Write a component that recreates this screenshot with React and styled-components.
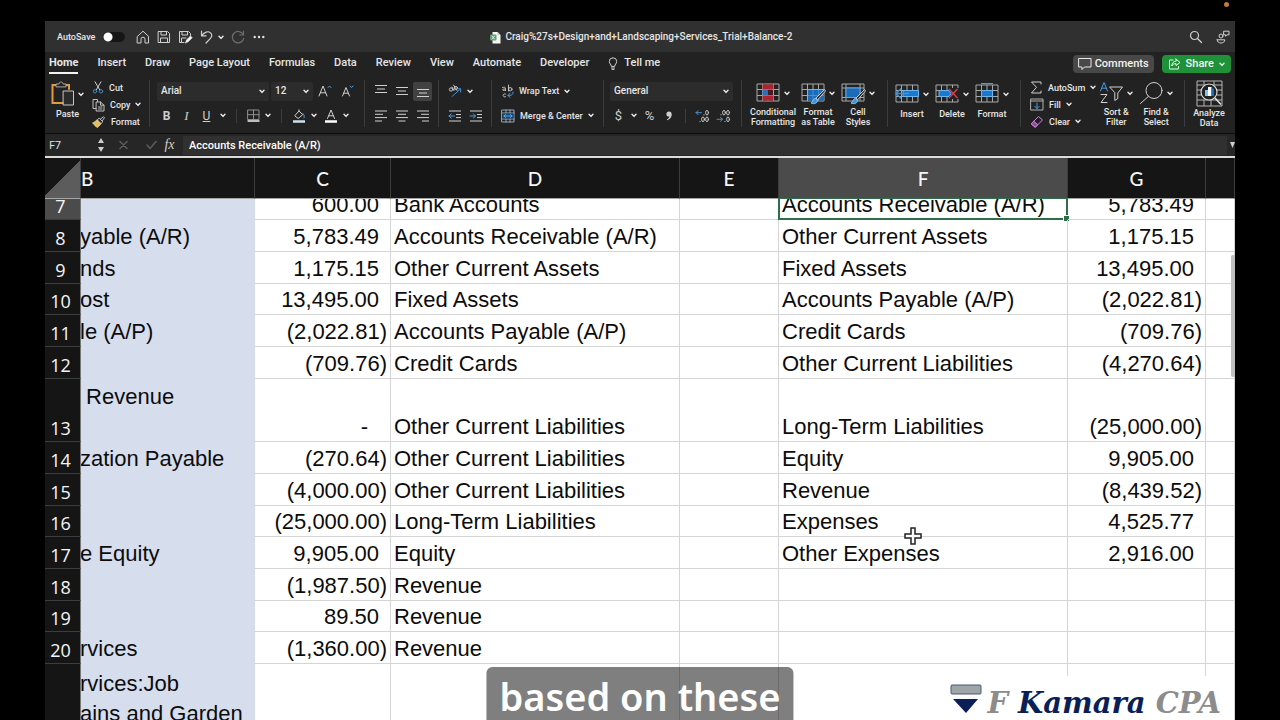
import React from 'react';
import styled, { createGlobalStyle, css } from 'styled-components';

const ui = 'Roboto, "Liberation Sans", sans-serif';
const sheetFont = '"Liberation Sans", Arial, sans-serif';
const headFont = 'Lato, "Open Sans", sans-serif';

const rows = [
  { n: 7, h: 21, b: '', c: '600.00', d: 'Bank Accounts', f: 'Accounts Receivable (A/R)', g: '5,783.49' },
  { n: 8, h: 32, b: 'yable (A/R)', c: '5,783.49', d: 'Accounts Receivable (A/R)', f: 'Other Current Assets', g: '1,175.15' },
  { n: 9, h: 32, b: 'nds', c: '1,175.15', d: 'Other Current Assets', f: 'Fixed Assets', g: '13,495.00' },
  { n: 10, h: 31, b: 'ost', c: '13,495.00', d: 'Fixed Assets', f: 'Accounts Payable (A/P)', g: '(2,022.81)' },
  { n: 11, h: 32, b: 'le (A/P)', c: '(2,022.81)', d: 'Accounts Payable (A/P)', f: 'Credit Cards', g: '(709.76)' },
  { n: 12, h: 32, b: '', c: '(709.76)', d: 'Credit Cards', f: 'Other Current Liabilities', g: '(4,270.64)' },
  { n: 13, h: 63, b: ' Revenue\n ', c: '-', d: 'Other Current Liabilities', f: 'Long-Term Liabilities', g: '(25,000.00)' },
  { n: 14, h: 32, b: 'zation Payable', c: '(270.64)', d: 'Other Current Liabilities', f: 'Equity', g: '9,905.00' },
  { n: 15, h: 32, b: '', c: '(4,000.00)', d: 'Other Current Liabilities', f: 'Revenue', g: '(8,439.52)' },
  { n: 16, h: 31, b: '', c: '(25,000.00)', d: 'Long-Term Liabilities', f: 'Expenses', g: '4,525.77' },
  { n: 17, h: 32, b: 'e Equity', c: '9,905.00', d: 'Equity', f: 'Other Expenses', g: '2,916.00' },
  { n: 18, h: 32, b: '', c: '(1,987.50)', d: 'Revenue', f: '', g: '' },
  { n: 19, h: 31, b: '', c: '89.50', d: 'Revenue', f: '', g: '' },
  { n: 20, h: 32, b: 'rvices', c: '(1,360.00)', d: 'Revenue', f: '', g: '' },
  { n: '', h: 65, b: 'rvices:Job\nains and Garden', c: '', d: '', f: '', g: '' },
];

const tabs = ['Home', 'Insert', 'Draw', 'Page Layout', 'Formulas', 'Data', 'Review', 'View', 'Automate', 'Developer'];

/* icons */

const Icon = ({ w = 14, h = 14, box, children, ...rest }) => (
  <svg
    width={w}
    height={h}
    viewBox={box || `0 0 ${w} ${h}`}
    fill="none"
    stroke="#d0d0d0"
    strokeLinecap="round"
    strokeLinejoin="round"
    aria-hidden="true"
    {...rest}
  >
    {children}
  </svg>
);

const Chevron = () => (
  <Icon w={6} h={5} stroke="#ececec" strokeWidth="1.4"><path d="M1 1.2l2 2.2 2-2.2" /></Icon>
);

const HomeIcon = () => (
  <Icon><path d="M1.5 6.3L7 1.2l5.500 5.100V13H9V9.200a2 2 0 0 0-4 0V13H1.500z" /></Icon>
);

const SaveIcon = () => (
  <Icon><path d="M1.500 1.500h9l2 2v9h-11zM4 1.500v3.500h5.500V1.500M3.500 12.500V8h7v4.500" /></Icon>
);

const SaveEditIcon = () => (
  <Icon w={15}>
    <path d="M6 12.500H1.500v-11h9l2 2v2M4 1.500v3.500h5.500V1.500M3.500 12.500V8H8" />
    <path d="M7.500 12.800l1-2.800 4-4 1.700 1.700-4 4z" fill="#f4f4f4" stroke="#f4f4f4" strokeWidth=".6" />
  </Icon>
);

const UndoIcon = () => (
  <Icon w={13}><path d="M1.500 1.200v4.600h4.600M1.800 5.500C4.500 2 8 .8 10.300 2.600c2.600 2.300 1.400 4.500-.3 6.200L6 13" strokeWidth="1.200" /></Icon>
);

const RedoIcon = () => (
  <Icon stroke="#6d6d6d"><path d="M12.500 1.200v3.800H8.800M12.300 4.800A5.700 5.700 0 1 0 12.700 8.300" strokeWidth="1.200" /></Icon>
);

const DotsIcon = () => (
  <Icon w={12} h={4} stroke="none" fill="#e2e2e2">
    <circle cx="1.700" cy="2" r="1.200" /><circle cx="6" cy="2" r="1.200" /><circle cx="10.300" cy="2" r="1.200" />
  </Icon>
);

const FileIcon = () => (
  <Icon w={11} h={13} stroke="none">
    <path d="M2.500 1h5l3 3v8.500h-8z" fill="#f3f6f3" />
    <path d="M7.500 1v3h3" fill="#b9c9bd" />
    <rect x="0" y="3.500" width="6.500" height="6" rx="1" fill="#5d9c73" />
    <path d="M2 5l2.500 3M4.500 5L2 8" stroke="#e9f5ec" strokeWidth=".9" />
  </Icon>
);

const SearchIcon = () => (
  <Icon><circle cx="5.500" cy="5.500" r="4" strokeWidth="1.200" /><path d="M8.500 8.500l4 4" strokeWidth="1.200" /></Icon>
);

const PeopleIcon = () => (
  <Icon>
    <circle cx="5" cy="6" r="2" />
    <path d="M1.200 9.800h7.600c0 2-1.600 3.200-3.800 3.200s-3.800-1.200-3.800-3.200zM8 1.200h5v3.600h-2L9.500 6.200V4.800H8z" />
  </Icon>
);

const BulbIcon = () => (
  <Icon w={10} h={13}>
    <path d="M3.300 9C3.300 7.300 1.300 6.700 1.300 4.500a3.700 3.700 0 0 1 7.400 0C8.700 6.700 6.700 7.300 6.700 9zM3.500 11h3M4 12.400h2" />
  </Icon>
);

const CommentIcon = () => (
  <Icon stroke="#e8e8e8"><path d="M1 1.500h12v8.500H6.500L4 12.500V10H1z" /></Icon>
);

const ShareIcon = () => (
  <Icon w={13} h={12} stroke="#e9ffe9">
    <path d="M5 2H1.500v9h9V8.500M8 1l4 3.500-4 3V5.700C6 5.600 4.700 6.300 3.700 8c.2-3 1.800-4.700 4.300-5z" />
  </Icon>
);

const PasteIcon = () => (
  <Icon w={24} h={26}>
    <path d="M12 22H1.500V4H18v4" stroke="#e09b3d" strokeWidth="2" strokeLinejoin="miter" />
    <path d="M5 5.500V3h3c0-2.700 4-2.700 4 0h3v2.500z" fill="#222" stroke="#a9a9a9" />
    <path d="M12.500 10h10v14h-10z" fill="#2a2a2a" stroke="#c6c6c6" />
  </Icon>
);

const CutIcon = () => (
  <Icon w={12} h={13}>
    <path d="M3 .8l4.700 8M9 .8l-4.700 8" />
    <circle cx="3" cy="10.300" r="1.700" stroke="#3f86c4" /><circle cx="9" cy="10.300" r="1.700" stroke="#3f86c4" />
  </Icon>
);

const CopyIcon = () => (
  <Icon w={13}>
    <path d="M4 10.500H1v-9h4.500v2M4.500 4h4l3.500 3.200V13H4.500zM8.500 4v3.200H12M6.500 9h3.500M6.500 11h3.500" strokeWidth=".9" />
  </Icon>
);

const BrushIcon = () => (
  <Icon w={14} h={12}>
    <path d="M1 7l4-3 4 4-3.500 3.500C3.500 10.500 2 9 1 7z" fill="#e3bd63" stroke="#e8d38a" strokeWidth=".8" />
    <path d="M5.500 3.500l1.800-1.300 3.500 3.600L9.300 7.300zM8.500 3l3-2.300 1 1-2.200 3" strokeWidth=".9" />
  </Icon>
);

const GrowIcon = ({ small }) => (
  <Icon w={14} h={14}>
    {small
      ? <><path d="M1.500 12L5 3.500 8.500 12M2.700 9.200h4.600" /><path d="M9 2l1.500 1.600L12 2" stroke="#4b9be0" /></>
      : <><path d="M1 12L5 2l4 10M2.400 8.800h5.200" /><path d="M10 3.600L11.500 2 13 3.600" stroke="#4b9be0" /></>}
  </Icon>
);

const BordersIcon = () => (
  <Icon w={13} h={13} strokeWidth=".9">
    <path d="M1 1h11v9.500H1zM6.500 1v9.500M1 5.700h11" stroke="#9a9a9a" />
    <path d="M1 12h11" stroke="#f2f2f2" strokeWidth="1.400" />
  </Icon>
);

const FillColorIcon = () => (
  <Icon>
    <path d="M3 6.500L7 2l3.700 3.700L6.500 9.300zM7 2V.8" />
    <path d="M11 4.500c1.500 1.700 1.500 3.500 1 4.500" stroke="#4b9be0" />
    <path d="M1 12.500h12" stroke="#cfe0ee" strokeWidth="2.500" strokeLinecap="butt" />
  </Icon>
);

const FontColorIcon = () => (
  <Icon>
    <path d="M3.500 9.500L7 1l3.500 8.500M4.700 6.800h4.600" />
    <path d="M1 12.500h12" stroke="#fff" strokeWidth="2.500" strokeLinecap="butt" />
  </Icon>
);

// y positions of the short and long strokes differ per vertical alignment
const lines = {
  top: 'M1 1.500h12M3 5h8M1 8.500h12',
  middle: 'M1 3.500h12M3 7h8M1 10.500h12',
  bottom: 'M1 5.500h12M3 9h8M1 12.500h12',
  left: 'M1 2h12M1 5.300h8M1 8.600h12M1 12h7',
  center: 'M1 2h12M3 5.300h8M1 8.600h12M3.500 12h7',
  right: 'M1 2h12M5 5.300h8M1 8.600h12M6 12h7',
};

const LinesIcon = ({ kind }) => <Icon><path d={lines[kind]} strokeLinecap="butt" /></Icon>;

const OrientationIcon = () => (
  <Icon strokeWidth=".9">
    <circle cx="3" cy="5.500" r="1.700" /><path d="M4 3l2 3.600M5.500 1l3.500 5.500" /><circle cx="7.800" cy="4" r="1.600" />
    <path d="M4 12.500l8.500-7.500M9.300 4.800h3.400v3.300" stroke="#4b9be0" />
  </Icon>
);

const IndentIcon = ({ flip }) => (
  <Icon>
    <path d="M1 2h12M8 5.500h5M8 8.600h5M1 12h12" strokeLinecap="butt" />
    <path d={flip ? 'M1 7h5.500M4.300 4.800L6.500 7 4.300 9.200' : 'M1 7h5.500M3.200 4.800L1 7l2.200 2.200'} stroke="#4b9be0" />
  </Icon>
);

const WrapIcon = () => (
  <Icon w={13}>
    <path d="M1.500 3.500c3-1 3 0 3 3M4.500 5c-4-.3-4 2.300 0 1.200M7.500 1v6" strokeWidth=".9" />
    <circle cx="9.300" cy="5.200" r="1.700" strokeWidth=".9" />
    <path d="M4.500 10c-3.300-1-3.300 3.600 0 2.800" strokeWidth=".9" />
    <path d="M12 8c.5 3-2 3.500-5 3.500M9 9.300L6.800 11.500 9 13.300" stroke="#4b9be0" />
  </Icon>
);

const MergeIcon = () => (
  <Icon>
    <path d="M1 1h12v12H1zM1 4h12M1 10h12M5 1v3M9 1v3M5 10v3M9 10v3" stroke="#9db7cc" strokeWidth=".9" />
    <path d="M1.500 4.500h11v5h-11z" fill="#17466f" stroke="none" />
    <path d="M3 7h8M4.500 5.500L3 7l1.500 1.500M9.500 5.500L11 7 9.500 8.500" stroke="#62b2f2" strokeWidth=".9" />
  </Icon>
);

const CommaIcon = () => (
  <Icon w={8} h={12} stroke="none" fill="#d0d0d0">
    <circle cx="4" cy="4" r="2.600" />
    <path d="M6.600 4c.2 3.200-1.500 5.300-4.300 6.300l-.4-.8C3.600 8.700 4.300 7.500 4.300 6z" />
  </Icon>
);

const DecimalIcon = ({ less }) => (
  <Icon w={15} strokeWidth=".9">
    <path d={less ? 'M5 5.800h0M9 12.500h0' : 'M9 5.800h0M5 12.500h0'} strokeWidth="1.200" />
    <ellipse cx="12" cy="3.700" rx="1.400" ry="2.300" />
    <ellipse cx="12" cy="10.300" rx="1.400" ry="2.300" />
    <ellipse cx="8" cy={less ? 3.7 : 10.3} rx="1.400" ry="2.300" />
    <path d={less ? 'M1 10.300h5.500M4.500 8.300l2 2-2 2' : 'M1 3.700h5.500M3 1.700l-2 2 2 2'} stroke="#4b9be0" />
  </Icon>
);

const Grid = ({ children }) => (
  <Icon w={25} h={23} strokeLinecap="butt" strokeLinejoin="miter">
    <path d="M1 2h22v17H1zM1 7.500h22M1 13.500h22M6.500 2v17M12 2v17M17.500 2v17" stroke="#a8a8a8" />
    {children}
  </Icon>
);

const PaintBrush = () => (
  <>
    <path d="M23.500 7.500L15 16l1.500 2 8-9z" fill="#333" stroke="#d8d8d8" strokeWidth=".9" />
    <path d="M14.500 16.300c-2.500 0-2 3.700-4.500 4.700 3 1.500 6.700.5 6.300-3z" fill="#3b94dc" stroke="#9dd0f7" strokeWidth=".8" />
  </>
);

const CondIcon = () => (
  <Grid>
    <path d="M6.500 2.500h11v5h-11zM6.500 13.500h11v5h-11z" fill="#b0202f" stroke="none" />
    <path d="M6.500 8h5v5h-5z" fill="#2f6fb5" stroke="none" />
    <path d="M12 8h5v5h-5z" fill="#4a1a22" stroke="none" />
  </Grid>
);
const TableIcon = () => <Grid><path d="M7 8h16v10.500H7z" fill="#1c6bb8" stroke="none" /><path d="M12 8v10M17.500 8v10M7 13.500h16" stroke="#5ea5e0" strokeWidth=".6" /><PaintBrush /></Grid>;

// one wide cell instead of the full grid
const StyleIcon = () => (
  <Icon w={25} h={23} strokeLinecap="butt" strokeLinejoin="miter">
    <path d="M1 2h22v17H1zM1 6h22M1 15.500h22M5 2v17M19 2v17" stroke="#a8a8a8" />
    <path d="M5 6h14v9.500H5z" fill="#1c6bb8" stroke="#5ea5e0" />
    <PaintBrush />
  </Icon>
);
const InsertIcon = () => (
  <Grid><path d="M8 7.500h15.500v6H8z" fill="#1c78cf" stroke="#6db5ee" /><path d="M14 10.500H1M6 5.500l-5 5 5 5" stroke="#3b94dc" strokeWidth="1.300" /></Grid>
);
const DeleteIcon = () => (
  <Grid><path d="M13 5h11v11H13z" fill="#222" stroke="none" /><path d="M4 7.500h10l2 3-2 3H4z" fill="#1c78cf" stroke="#6db5ee" /><path d="M14 6l8.500 9M22.500 6l-8.500 9" stroke="#d3414d" strokeWidth="1.400" /></Grid>
);
const FormatIcon = () => (
  <Grid><path d="M6.500 7.500h11v6h-11z" fill="#1c78cf" stroke="#6db5ee" /><path d="M6 .600h12" stroke="#4b9be0" strokeWidth="1.200" /></Grid>
);

const SumIcon = () => <Icon w={13} h={13}><path d="M11 3V1H1.500l5 5.300-5 5.700H11v-2" /></Icon>;
const FillIcon = () => (
  <Icon w={14} h={13}><path d="M1 1h12v11H1zM1 3h12" stroke="#b0b0b0" /><path d="M7 5v5.500M4.800 8.300L7 10.500l2.200-2.200" stroke="#4b9be0" /></Icon>
);
const ClearIcon = () => (
  <Icon w={14} h={13}><path d="M1.500 8.500L8.500 1.500l4 3.500-7 7z" stroke="#c98bd6" /><path d="M1.500 8.500l2.300-2.300 4 3.500-2.300 2.300z" fill="#9a45ad" stroke="#c98bd6" /></Icon>
);

const SortIcon = () => (
  <Icon w={25} h={24}>
    <path d="M1.500 10L5 1.500 8.500 10M2.700 7.200h4.600" stroke="#4b9be0" />
    <path d="M2 13.500h6L2 21.500h6" />
    <path d="M11 6h12.500l-4.700 6v5.500l-3 2V12z" />
  </Icon>
);
const FindIcon = () => <Icon w={25} h={24}><circle cx="15" cy="9.500" r="8" /><path d="M9.300 15.500L1.500 22.500" /></Icon>;
const AnalyzeIcon = () => (
  <Icon w={27} h={27} strokeLinecap="butt">
    <path d="M1 1h25v25H1zM1 5h25M1 10h5M21 10h5M1 15h5M21 15h5M1 20h25M8 20v6M15 20v6M8 1v4M18 1v4" stroke="#b5b5b5" />
    <circle cx="13" cy="12" r="8" fill="#222" stroke="#ddd" strokeWidth="1.200" />
    <path d="M19 18l6 6.500" stroke="#e2e2e2" strokeWidth="1.600" />
    <path d="M9 10h3v6H9z" fill="#7fc0ee" stroke="none" /><path d="M12 7h3.500v9H12z" fill="#fff" stroke="none" /><path d="M15.500 8.500H18V16h-2.500z" fill="#1c6bb8" stroke="none" />
  </Icon>
);

/* styled parts */

const GlobalStyle = createGlobalStyle`
  * { box-sizing: border-box; }
  body { margin: 0; background: #000; }
  button, input, select {
    font: inherit;
    color: inherit;
    border: 0;
    padding: 0;
    background: none;
  }
`;

const Screen = styled.div`
  position: relative;
  height: 100vh;
  padding: 21px 45px 0;
  overflow: hidden;
  background: #000;
`;

const RecordDot = styled.span`
  position: absolute;
  top: 2px;
  right: 51px;
  width: 5px;
  height: 5px;
  border-radius: 50%;
  background: #c07a3a;
`;

const Window = styled.div`
  display: flex;
  flex-direction: column;
  height: 100%;
  overflow: hidden;
  background: #222;
  color: #e6e6e6;
  font: 500 9px/10px ${ui};
`;

const TitleBar = styled.header`
  display: grid;
  grid-template-columns: 1fr auto 1fr;
  align-items: center;
  height: 31px;
  padding: 1px 5px 0 12px;
  background: #303030;
`;

const Quick = styled.div`
  display: flex;
  align-items: center;
  gap: 7px;
  justify-content: ${(p) => (p.$end ? 'flex-end' : 'flex-start')};
`;

const IconButton = styled.button`
  display: flex;
  align-items: center;
  justify-content: center;
  flex: none;
  gap: 5px;
  min-width: ${(p) => p.$w || 14}px;
  height: ${(p) => p.$h || 14}px;
  ${(p) => p.$active && css`background: #414141; border-radius: 2px;`}
`;

const SwitchLabel = styled.label`
  display: flex;
  align-items: center;
  gap: 8px;
  margin-right: 4px;
`;

const Switch = styled.input`
  appearance: none;
  width: 22px;
  height: 10px;
  margin: 0;
  border-radius: 5px;
  background: radial-gradient(circle at 5px 5px, #fff 4px, transparent 5px), #161616;
`;

const Title = styled.h1`
  display: flex;
  align-items: center;
  gap: 4px;
  margin: 0;
  padding-right: 4px;
  font-size: 10px;
  font-weight: 500;
  line-height: 14px;
  white-space: nowrap;
`;

const TabRow = styled.nav`
  display: flex;
  align-items: center;
  gap: 19px;
  height: 24px;
  padding: 0 4px;
  font-size: 11px;
  line-height: 14px;
`;

const Tab = styled.button`
  display: flex;
  align-items: center;
  gap: 6px;
  height: 20px;
  border-bottom: 2px solid ${(p) => (p.$active ? '#f2f2f2' : 'transparent')};
  font-weight: ${(p) => (p.$active ? 700 : 500)};
  white-space: nowrap;
`;

const TabActions = styled.div`
  display: flex;
  gap: 8px;
  margin-left: auto;
`;

const ActionButton = styled.button`
  display: flex;
  align-items: center;
  gap: ${(p) => (p.$primary ? 5 : 3)}px;
  height: 18px;
  padding: 0 ${(p) => (p.$primary ? 6 : 5)}px;
  border-radius: 4px;
  background: ${(p) => (p.$primary ? '#1e9139' : '#484848')};
  color: #f4f4f4;
`;

const Ribbon = styled.div`
  display: flex;
  height: 58px;
  padding: 4px 0 6px;
  border-bottom: 1px solid #0a0a0a;
`;

const Group = styled.section`
  display: flex;
  flex: none;
  flex-direction: ${(p) => (p.$stack ? 'column' : 'row')};
  gap: ${(p) => p.$gap || 0}px;
  width: ${(p) => p.$w}px;
  padding: ${(p) => p.$pad || '0'};
  border-right: 1px solid #3c3c3c;
  &:last-child { border-right: 0; flex: 1 0 auto; }
`;

const Stack = styled.div`
  display: flex;
  flex-direction: column;
  gap: 2px;
`;

const Line = styled.div`
  display: flex;
  align-items: center;
  gap: ${(p) => (p.$gap === undefined ? 7 : p.$gap)}px;
  height: 24px;
  padding-left: ${(p) => p.$indent || 0}px;
`;

const Rule = styled.span`
  width: 1px;
  height: 14px;
  margin: 0 3px;
  background: #3c3c3c;
`;

const Command = styled.button`
  display: flex;
  align-items: center;
  flex: none;
  gap: 5px;
  height: 15px;
  white-space: nowrap;
  svg:first-child { flex: none; }
`;

const BigButton = styled.button`
  display: flex;
  flex-direction: column;
  align-items: center;
  flex: none;
  width: ${(p) => p.$w || 40}px;
`;

const BigIcon = styled.span`
  display: flex;
  align-items: center;
  gap: 3px;
  height: 28px;
  margin-bottom: 1px;
`;

const Select = styled.label`
  display: flex;
  align-items: center;
  width: ${(p) => p.$w}px;
  height: 19px;
  padding: 0 4px;
  border-radius: 2px;
  background: #2c2c2c;
  font-size: 10px;
  select { appearance: none; flex: 1; min-width: 0; }
`;

const Letter = styled.button`
  width: 13px;
  height: 14px;
  font: ${(p) => p.$font || `400 12px/14px ${ui}`};
  text-decoration: ${(p) => (p.$underline ? 'underline' : 'none')};
  color: #cfcfcf;
`;

const FormulaBar = styled.div`
  display: flex;
  align-items: center;
  height: 24px;
  flex: none;
  border-bottom: 2px solid #dcdcdc;
  background: #262626;
  font: 400 11px/14px "Open Sans", sans-serif;
`;

const NameBox = styled.input`
  width: 50px;
  padding-left: 4px;
`;

const Spinner = styled.span`
  display: flex;
  width: 24px;
`;

const FormulaInput = styled.input`
  flex: 1;
  height: 19px;
  margin-left: 7px;
  padding-left: 6px;
  background: #303030;
  color: #fff;
  font: 500 11px/14px ${ui};
`;

const Sheet = styled.main`
  position: relative;
  flex: 1;
  min-height: 0;
  overflow: hidden;
  background: #fff;
`;

const Table = styled.table`
  width: 100%;
  table-layout: fixed;
  border-spacing: 0;
  color: #0c0c0c;
  font: 400 22px/30px ${sheetFont};
`;

const ColHead = styled.th`
  height: 41px;
  padding: 1px 0 0;
  border-right: 1px solid #3d3d3d;
  border-bottom: 1px solid #a5a5a5;
  background: ${(p) => (p.$selected ? '#4b4b4b' : '#151515')};
  color: #f5f5f5;
  font: 500 19px/24px ${headFont};
  text-align: ${(p) => p.$align || 'center'};
`;

const Corner = styled(ColHead)`
  padding: 0;
  background: linear-gradient(135deg, #151515 50%, #5c5c5c 50%);
`;

const RowHead = styled.th`
  padding: 0 4px 0 0;
  border-right: 1px solid #777;
  border-bottom: 1px solid #3d3d3d;
  background: ${(p) => (p.$selected ? '#4b4b4b' : '#151515')};
  color: #f5f5f5;
  font: 500 18px/28px "Open Sans", "Noto Sans", sans-serif;
  vertical-align: bottom;
`;

const Cell = styled.td`
  position: relative;
  padding: 0;
  border-right: 1px solid #d5d5d5;
  border-bottom: 1px solid #d5d5d5;
  vertical-align: bottom;
  ${(p) => p.$shaded && css`background: #d6deee; border-color: #d6deee;`}
`;

// the text box reaches over the cell's bottom border
const Clip = styled.div`
  display: flex;
  flex-direction: column;
  justify-content: flex-end;
  height: ${(p) => p.$h}px;
  margin-bottom: -1px;
  overflow: hidden;
  white-space: pre;
`;

const Label = styled.span`
  margin-left: ${(p) => (p.$scrolled ? '-1px' : '3px')};
`;

const Amount = styled.span`
  text-align: right;
  padding-right: ${(p) => (p.$kind === 'dash' ? 22 : p.$kind === 'negative' ? 3 : 11)}px;
`;

const Selection = styled.span`
  position: absolute;
  inset: -1px;
  border: 2px solid #2f6e4a;
  border-top-width: 1px;
  &::after {
    content: '';
    position: absolute;
    right: -3px;
    bottom: -3px;
    width: 5px;
    height: 5px;
    background: #2f6e4a;
    outline: 1px solid #fff;
  }
`;

const ScrollThumb = styled.span`
  position: absolute;
  top: 97px;
  right: 0;
  width: 4px;
  height: 122px;
  border-radius: 2px 0 0 2px;
  background: #c0c0c0;
`;

const Pointer = styled.svg`
  position: absolute;
  left: 904px;
  top: 527px;
`;

const Caption = styled.p`
  position: absolute;
  left: 50%;
  top: 667px;
  transform: translateX(-50%);
  margin: 0;
  padding: 1px 13px;
  border-radius: 6px;
  background: rgba(0, 0, 0, 0.5);
  color: #fff;
  font: 600 38px/56px "Noto Sans", "Open Sans", sans-serif;
  white-space: nowrap;
`;

const Brand = styled.div`
  position: absolute;
  right: 55px;
  top: 676px;
  display: flex;
  align-items: flex-end;
  gap: 5px;
  height: 44px;
  padding-right: 4px;
  background: #fff;
  color: #8c8c8c;
  font: italic 700 29px/34px "DejaVu Serif", serif;
  white-space: nowrap;
  strong { color: #0a1f57; }
`;

const amountKind = (v) => (v === '-' ? 'dash' : v.endsWith(')') ? 'negative' : 'positive');

const Big = ({ icon, text, w, menu = true }) => (
  <BigButton $w={w} type="button">
    <BigIcon>{icon}{menu && <Chevron />}</BigIcon>
    {text.map((t) => <span key={t}>{t}</span>)}
  </BigButton>
);

const Toolbar = () => (
  <Ribbon>
    <Group $w={105} $gap={2}>
      <Big w={45} icon={<PasteIcon />} text={['Paste']} />
      <Stack>
        <Command type="button"><CutIcon />Cut</Command>
        <Command type="button"><CopyIcon />Copy<Chevron /></Command>
        <Command type="button"><BrushIcon />Format</Command>
      </Stack>
    </Group>
    <Group $w={215} $stack $gap={2} $pad="0 0 0 7px">
      <Line $gap={2}>
        <Select $w={112}><select aria-label="Font"><option>Arial</option></select><Chevron /></Select>
        <Select $w={42}><select aria-label="Font size"><option>12</option></select><Chevron /></Select>
        <IconButton $w={20} aria-label="Increase font size"><GrowIcon /></IconButton>
        <IconButton $w={22} aria-label="Decrease font size"><GrowIcon small /></IconButton>
      </Line>
      <Line $indent={3}>
        <Letter $font={`700 12px/14px ${ui}`}>B</Letter>
        <Letter $font='italic 400 13px/14px "Liberation Serif", serif'>I</Letter>
        <Letter $underline>U</Letter>
        <Chevron />
        <Rule />
        <IconButton aria-label="Borders"><BordersIcon /><Chevron /></IconButton>
        <Rule />
        <IconButton aria-label="Fill color"><FillColorIcon /><Chevron /></IconButton>
        <IconButton aria-label="Font color"><FontColorIcon /><Chevron /></IconButton>
      </Line>
    </Group>
    <Group $w={74} $stack $gap={2} $pad="0 0 0 6px">
      <Line $gap={1}>
        <IconButton $w={19} $h={19} aria-label="Top align"><LinesIcon kind="top" /></IconButton>
        <IconButton $w={21} $h={19} aria-label="Middle align"><LinesIcon kind="middle" /></IconButton>
        <IconButton $w={19} $h={19} $active aria-label="Bottom align"><LinesIcon kind="bottom" /></IconButton>
      </Line>
      <Line $gap={1}>
        <IconButton $w={19} aria-label="Align left"><LinesIcon kind="left" /></IconButton>
        <IconButton $w={21} aria-label="Center"><LinesIcon kind="center" /></IconButton>
        <IconButton $w={19} aria-label="Align right"><LinesIcon kind="right" /></IconButton>
      </Line>
    </Group>
    <Group $w={53} $stack $gap={2} $pad="0 0 0 9px">
      <Line><IconButton aria-label="Orientation"><OrientationIcon /><Chevron /></IconButton></Line>
      <Line>
        <IconButton aria-label="Decrease indent"><IndentIcon /></IconButton>
        <IconButton aria-label="Increase indent"><IndentIcon flip /></IconButton>
      </Line>
    </Group>
    <Group $w={112} $stack $gap={2} $pad="0 0 0 9px">
      <Line><Command type="button"><WrapIcon />Wrap Text<Chevron /></Command></Line>
      <Line><Command type="button"><MergeIcon />Merge &amp; Center<Chevron /></Command></Line>
    </Group>
    <Group $w={138} $stack $gap={2} $pad="0 0 0 6px">
      <Line>
        <Select $w={123}><select aria-label="Number format"><option>General</option></select><Chevron /></Select>
      </Line>
      <Line $indent={2} $gap={6}>
        <Letter $font={`400 13px/14px ${ui}`}>$</Letter>
        <Chevron />
        <Letter $font={`400 13px/14px ${ui}`}>%</Letter>
        <IconButton aria-label="Comma style"><CommaIcon /></IconButton>
        <Rule />
        <IconButton aria-label="Increase decimal"><DecimalIcon /></IconButton>
        <IconButton aria-label="Decrease decimal"><DecimalIcon less /></IconButton>
      </Line>
    </Group>
    <Group $w={146} $pad="0 0 0 6px">
      <Big w={50} icon={<CondIcon />} text={['Conditional', 'Formatting']} />
      <Big icon={<TableIcon />} text={['Format', 'as Table']} />
      <Big icon={<StyleIcon />} text={['Cell', 'Styles']} />
    </Group>
    <Group $w={133} $pad="0 0 0 4px">
      <Big icon={<InsertIcon />} text={['Insert']} />
      <Big icon={<DeleteIcon />} text={['Delete']} />
      <Big icon={<FormatIcon />} text={['Format']} />
    </Group>
    <Group $w={164} $pad="0 0 0 9px">
      <Stack>
        <Command type="button"><SumIcon />AutoSum<Chevron /></Command>
        <Command type="button"><FillIcon />Fill<Chevron /></Command>
        <Command type="button"><ClearIcon />Clear<Chevron /></Command>
      </Stack>
      <Big icon={<SortIcon />} text={['Sort &', 'Filter']} />
      <Big icon={<FindIcon />} text={['Find &', 'Select']} />
    </Group>
    <Group $w={50} $pad="0 0 0 4px">
      <Big icon={<AnalyzeIcon />} text={['Analyze', 'Data']} menu={false} />
    </Group>
  </Ribbon>
);

const Ledger = () => (
  <Table>
    <colgroup>
      {[36, 174, 136, 289, 99, 289, 138].map((w, i) => <col key={i} style={{ width: w }} />)}
      <col />
    </colgroup>
    <thead>
      <tr>
        <Corner aria-label="Select all" />
        <ColHead $align="left">B</ColHead>
        <ColHead>C</ColHead>
        <ColHead>D</ColHead>
        <ColHead>E</ColHead>
        <ColHead $selected>F</ColHead>
        <ColHead>G</ColHead>
        <ColHead />
      </tr>
    </thead>
    <tbody>
      {rows.map((r) => (
        <tr key={r.n}>
          <RowHead scope="row" $selected={r.n === 7}><Clip $h={r.h}>{r.n}</Clip></RowHead>
          <Cell $shaded><Clip $h={r.h}><Label $scrolled>{r.b}</Label></Clip></Cell>
          <Cell><Clip $h={r.h}><Amount $kind={amountKind(r.c)}>{r.c}</Amount></Clip></Cell>
          <Cell><Clip $h={r.h}><Label>{r.d}</Label></Clip></Cell>
          <Cell />
          <Cell>
            <Clip $h={r.h}><Label>{r.f}</Label></Clip>
            {r.n === 7 && <Selection />}
          </Cell>
          <Cell><Clip $h={r.h}><Amount $kind={amountKind(r.g)}>{r.g}</Amount></Clip></Cell>
          <Cell />
        </tr>
      ))}
    </tbody>
  </Table>
);

const App = () => (
  <Screen>
    <GlobalStyle />
    <RecordDot />
    <Window>
      <TitleBar>
        <Quick>
          <SwitchLabel>AutoSave<Switch type="checkbox" role="switch" /></SwitchLabel>
          <IconButton aria-label="Home"><HomeIcon /></IconButton>
          <IconButton aria-label="Save"><SaveIcon /></IconButton>
          <IconButton aria-label="Save as"><SaveEditIcon /></IconButton>
          <IconButton aria-label="Undo"><UndoIcon /><Chevron /></IconButton>
          <IconButton aria-label="Redo"><RedoIcon /></IconButton>
          <IconButton aria-label="More"><DotsIcon /></IconButton>
        </Quick>
        <Title><FileIcon />Craig%27s+Design+and+Landscaping+Services_Trial+Balance-2</Title>
        <Quick $end>
          <IconButton $w={26} aria-label="Search"><SearchIcon /></IconButton>
          <IconButton aria-label="Collaborate"><PeopleIcon /></IconButton>
        </Quick>
      </TitleBar>
      <TabRow>
        {tabs.map((t) => <Tab key={t} $active={t === 'Home'} type="button">{t}</Tab>)}
        <Tab type="button"><BulbIcon />Tell me</Tab>
        <TabActions>
          <ActionButton type="button"><CommentIcon />Comments</ActionButton>
          <ActionButton $primary type="button"><ShareIcon />Share<Chevron /></ActionButton>
        </TabActions>
      </TabRow>
      <Toolbar />
      <FormulaBar>
        <NameBox aria-label="Name box" defaultValue="F7" />
        <Spinner>
          <Icon w={12} h={16} stroke="none" fill="#cfcfcf"><path d="M6 1l3 5H3zM6 15l3-5H3z" /></Icon>
        </Spinner>
        <Quick>
          <Icon w={20} h={10} stroke="#5c5c5c" strokeWidth="1.500"><path d="M1 1.500l7 7M8 1.500l-7 7" /></Icon>
          <Icon w={17} h={10} stroke="#5c5c5c" strokeWidth="1.500"><path d="M1 5l3 3.500 6-7" /></Icon>
        </Quick>
        <Letter $font='italic 400 14px/14px "Liberation Serif", serif'>fx</Letter>
        <FormulaInput aria-label="Formula" defaultValue="Accounts Receivable (A/R)" />
        <Icon w={8} h={8} stroke="none" fill="#cfcfcf"><path d="M3 1h5L5.500 7z" /></Icon>
      </FormulaBar>
      <Sheet>
        <Ledger />
        <ScrollThumb />
      </Sheet>
    </Window>
    <Pointer width="18" height="18" viewBox="0 0 18 18" aria-hidden="true">
      <path d="M7 1h4v6h6v4h-6v6H7v-6H1V7h6z" fill="#fff" stroke="#222" strokeWidth="1.500" />
    </Pointer>
    <Caption>based on these</Caption>
    <Brand>
      <svg width="32" height="36" viewBox="0 0 32 36" aria-hidden="true">
        <rect x="1" y="1" width="30" height="9" rx="1" fill="#9fa4a6" stroke="#46577d" />
        <path d="M3 15h25L16 29z" fill="#0a1f57" />
      </svg>
      <span>F <strong>Kamara</strong> CPA</span>
    </Brand>
  </Screen>
);

export default App;
